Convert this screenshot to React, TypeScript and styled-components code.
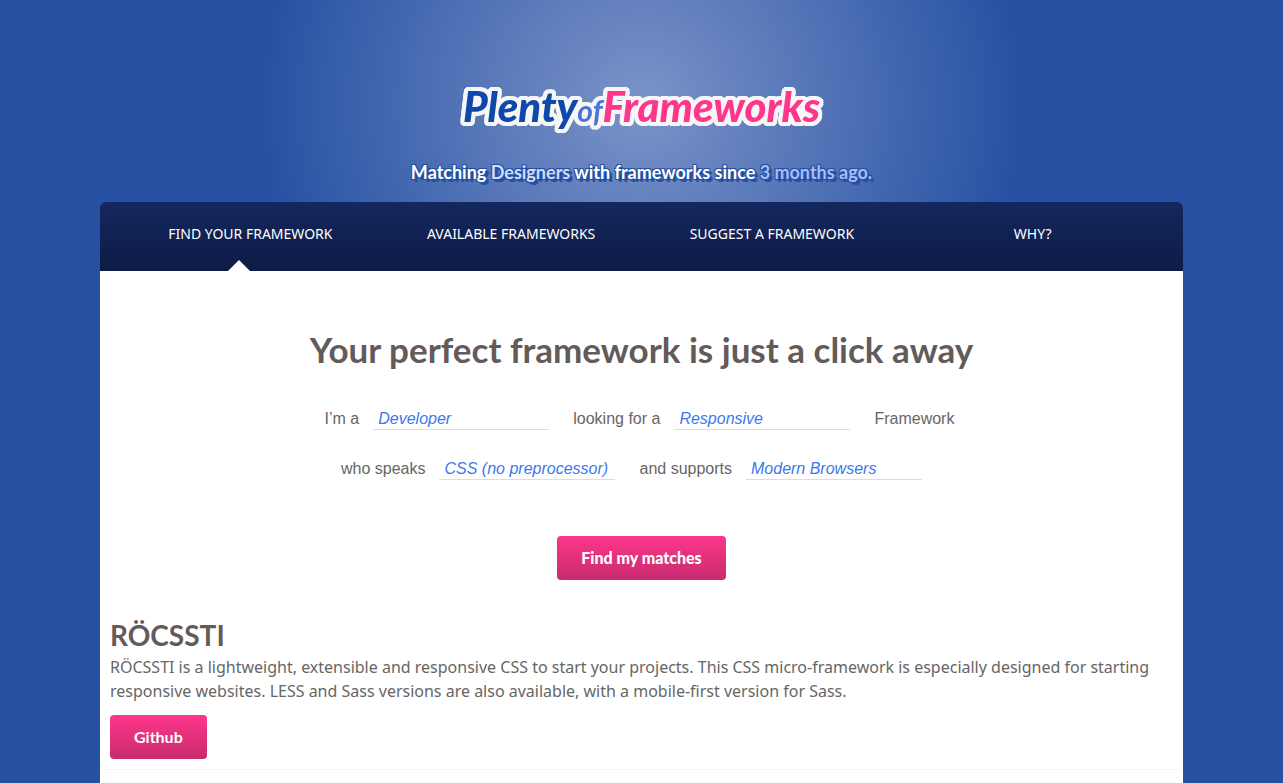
import React from "react";
import styled, { createGlobalStyle } from "styled-components";

const display = `Lato, "Open Sans", sans-serif`;
const body = `"Noto Sans", "Open Sans", sans-serif`;

const GlobalStyle = createGlobalStyle`
  *, *::before, *::after { box-sizing: border-box; }
  html { min-height: 100%; background: #2651a3; }
  body {
    margin: 0;
    color: #666;
    font: 16px/24px ${body};
  }
  h1, h2, p, ul { margin: 0; padding: 0; }
`;

const Page = styled.div`
  display: flex;
  flex-direction: column;
  min-height: 100vh;
  padding: 0 100px;
  overflow: hidden;
  background: #2651a3 radial-gradient(circle 382px at 50% 104px, #7b93c8 0%, #2651a3 100%) no-repeat;
`;

const Header = styled.header`
  display: flex;
  flex-direction: column;
  align-items: center;
  padding: 80px 0 16px;
  text-align: center;
`;

const Logo = styled.h1`
  display: flex;
  align-items: baseline;
  font: italic 900 42px/52px ${display};
  filter: drop-shadow(2px 0 0 #f6f6f6) drop-shadow(-2px 0 0 #f6f6f6)
    drop-shadow(0 2px 0 #f6f6f6) drop-shadow(0 -2px 0 #f6f6f6)
    drop-shadow(1px 1px 0 #f6f6f6) drop-shadow(-1px -1px 0 #f6f6f6)
    drop-shadow(1px -1px 0 #f6f6f6) drop-shadow(-1px 1px 0 #f6f6f6);
`;

const LogoWord = styled.span<{ $color: string; $small?: boolean }>`
  color: ${(p) => p.$color};
  font-size: ${(p) => (p.$small ? "30px" : "inherit")};
  line-height: ${(p) => (p.$small ? "30px" : "inherit")};
  font-weight: ${(p) => (p.$small ? 700 : 900)};
`;

const Tagline = styled.p`
  margin-top: 26px;
  color: #fff;
  font: 700 18px/28px ${display};
  text-shadow: -1px -1px 0 #2651a3, 1px -1px 0 #2651a3, -1px 1px 0 #2651a3,
    1px 1px 0 #2651a3, 2px 2px 0 #2651a3, 3px 3px 0 #2651a3;
`;

const Accent = styled.span<{ $color: string }>`
  color: ${(p) => p.$color};
`;

const Nav = styled.nav`
  border-radius: 6px 6px 0 0;
  background: linear-gradient(#14275f, #0e1b45);
`;

const NavList = styled.ul`
  display: grid;
  grid-template-columns: repeat(4, 1fr);
  padding: 0 20px;
  list-style: none;
`;

const NavItem = styled.li`
  position: relative;
`;

const NavLink = styled.a`
  display: block;
  padding: 20px 0 25px;
  color: #fff;
  font-size: 14px;
  line-height: 24px;
  text-align: center;
  text-decoration: none;
  text-transform: uppercase;
`;

const Pointer = styled.span`
  position: absolute;
  bottom: 0;
  left: 108px;
  border: solid transparent;
  border-width: 0 11px 11px;
  border-bottom-color: #fff;
`;

const Main = styled.main`
  flex: 1;
  background: #fff;
`;

const Finder = styled.form`
  display: flex;
  flex-direction: column;
  align-items: center;
  padding: 54px 10px 36px;
`;

const FinderTitle = styled.h2`
  margin-bottom: 31px;
  color: #635a5a;
  font: 700 35px/48px ${display};
  text-align: center;
`;

const Sentence = styled.div`
  display: flex;
  flex-wrap: wrap;
  justify-content: center;
  column-gap: 4px;
  margin-bottom: 20px;
  font: 16px/30px "Liberation Sans", Arial, sans-serif;
`;

const Field = styled.label`
  display: flex;
  gap: 14px;
  padding-right: 20px;
`;

const Word = styled.span`
  padding-right: 4px;
`;

const Select = styled.select`
  appearance: none;
  width: 176px;
  height: 26px;
  padding: 4px 5px 0;
  border: 0;
  border-bottom: 1px solid #ddd;
  border-radius: 0;
  background: transparent;
  color: #3b78ee;
  font: italic 16px "Liberation Sans", Arial, sans-serif;
`;

const pink = `
  display: inline-block;
  height: 44px;
  padding: 0 24px;
  border: 0;
  border-radius: 4px;
  background: linear-gradient(#ff368b, #c72b6d);
  color: #fff;
  text-decoration: none;
  cursor: pointer;
`;

const SubmitButton = styled.button`
  ${pink}
  margin-top: 32px;
  font: 900 16px/44px ${display};
`;

const GithubLink = styled.a`
  ${pink}
  margin-top: 12px;
  font: 700 16px/44px ${display};
`;

const Result = styled.article`
  padding: 0 10px 10px;
  border-bottom: 1px solid #f6f6f6;
`;

const ResultTitle = styled.h2`
  color: #635a5a;
  font: 700 28px/39px ${display};
`;

const nav = ["Find your framework", "Available frameworks", "Suggest a framework", "Why?"];

function Choice({ label, options }: { label: string; options: string[] }) {
  return (
    <Field>
      {label}
      <Select>
        {options.map((option) => (
          <option key={option}>{option}</option>
        ))}
      </Select>
    </Field>
  );
}

export default function App() {
  return (
    <>
      <GlobalStyle />
      <Page>
        <Header>
          <Logo>
            <LogoWord $color="#0f47ab">Plenty</LogoWord>
            <LogoWord $color="#4a74dc" $small>of</LogoWord>
            <LogoWord $color="#ff368b">Frameworks</LogoWord>
          </Logo>
          <Tagline>
            Matching <Accent $color="#d3dcf7">Designers</Accent> with frameworks since{" "}
            <Accent $color="#a9bbfa">3 months ago.</Accent>
          </Tagline>
        </Header>
        <Nav>
          <NavList>
            {nav.map((item, i) => (
              <NavItem key={item}>
                <NavLink href="#">{item}</NavLink>
                {i === 0 && <Pointer />}
              </NavItem>
            ))}
          </NavList>
        </Nav>
        <Main>
          <Finder onSubmit={(e) => e.preventDefault()}>
            <FinderTitle>Your perfect framework is just a click away</FinderTitle>
            <Sentence>
              <Choice label="I’m a" options={["Developer", "Designer"]} />
              <Choice label="looking for a" options={["Responsive", "Fixed"]} />
              <Word>Framework</Word>
            </Sentence>
            <Sentence>
              <Choice label="who speaks" options={["CSS (no preprocessor)", "LESS", "Sass"]} />
              <Choice label="and supports" options={["Modern Browsers", "Old Browsers"]} />
            </Sentence>
            <SubmitButton type="submit">Find my matches</SubmitButton>
          </Finder>
          <Result>
            <ResultTitle>RÖCSSTI</ResultTitle>
            <p>
              RÖCSSTI is a lightweight, extensible and responsive CSS to start your projects. This CSS
              micro-framework is especially designed for starting responsive websites. LESS and Sass
              versions are also available, with a mobile-first version for Sass.
            </p>
            <GithubLink href="#">Github</GithubLink>
          </Result>
        </Main>
      </Page>
    </>
  );
}
